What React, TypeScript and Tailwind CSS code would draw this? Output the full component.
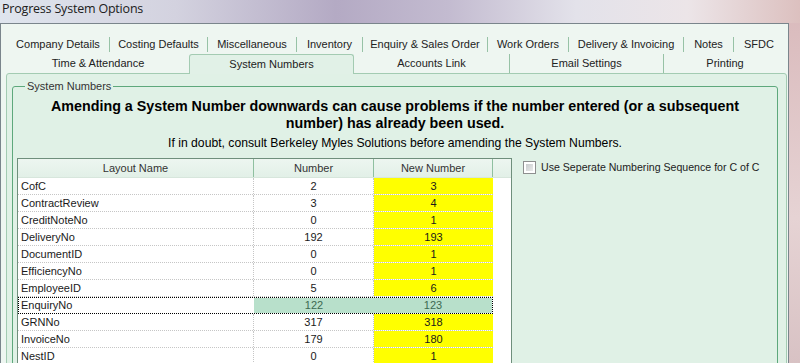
import React from 'react'

type Row = { name: string; num: string; next: string; sel?: boolean }

const rows: Row[] = [
  { name: 'CofC', num: '2', next: '3' },
  { name: 'ContractReview', num: '3', next: '4' },
  { name: 'CreditNoteNo', num: '0', next: '1' },
  { name: 'DeliveryNo', num: '192', next: '193' },
  { name: 'DocumentID', num: '0', next: '1' },
  { name: 'EfficiencyNo', num: '0', next: '1' },
  { name: 'EmployeeID', num: '5', next: '6' },
  { name: 'EnquiryNo', num: '122', next: '123', sel: true },
  { name: 'GRNNo', num: '317', next: '318' },
  { name: 'InvoiceNo', num: '179', next: '180' },
  { name: 'NestID', num: '0', next: '1' },
]

const topTabs = [
  { label: 'Company Details', w: 'w-[103px]' },
  { label: 'Costing Defaults', w: 'w-[98px]' },
  { label: 'Miscellaneous', w: 'w-[89px]' },
  { label: 'Inventory', w: 'w-[66px]' },
  { label: 'Enquiry & Sales Order', w: 'w-[125px]' },
  { label: 'Work Orders', w: 'w-[81px]' },
  { label: 'Delivery & Invoicing', w: 'w-[115px]' },
  { label: 'Notes', w: 'w-[50px]' },
  { label: 'SFDC', w: 'w-[50px]' },
]

const font = "font-['Liberation_Sans',Arial,sans-serif]"

export default function App() {
  return (
    <div className="relative w-[800px] h-[363px] overflow-hidden bg-[linear-gradient(180deg,#d9b9bb_0%,#e6d3d4_60%,#d8c2c4_100%)] text-[#1b1b1b]">
      {/* title bar */}
      <div className="h-[23px] pl-[2px] flex items-center bg-[linear-gradient(90deg,#dfe5ee_0%,#d3d2df_22%,#b4aac4_42%,#c3bbd0_56%,#e3e2ea_72%,#ece5e8_86%,#dcc0bf_100%)]">
        <span className="text-[12.5px] text-[#202020] font-['Open_Sans',sans-serif] tracking-[-0.2px] leading-none mt-[-4px]">
          Progress System Options
        </span>
      </div>

      {/* window body */}
      <div className={`w-[789px] h-[340px] border-t border-l border-r border-[#7a858c] bg-[#eef6f1] pt-[12px] ${font}`}>
        {/* tab row 1 */}
        <div className="flex items-center h-[17px] pl-[6px] text-[11px] text-[#222]">
          {topTabs.map((t, i) => (
            <div
              key={t.label}
              className={`${t.w} h-[15px] flex items-center justify-center ${
                i < topTabs.length - 1 ? 'border-r border-[#97c2a6]' : ''
              }`}
            >
              {t.label}
            </div>
          ))}
        </div>

        {/* tab row 2 */}
        <div className="flex items-end h-[20px] pl-[6px] text-[11px] text-[#222] relative z-10">
          <div className="w-[182px] h-[19px] flex items-center justify-center">Time &amp; Attendance</div>
          <div className="w-[165px] h-[20px] mb-[-1px] flex items-center justify-center bg-[#e1f1e7] border border-b-0 border-[#a3cbb2] rounded-t-[3px]">
            System Numbers
          </div>
          <div className="w-[156px] h-[19px] flex items-center justify-center border-r border-[#97c2a6]">
            Accounts Link
          </div>
          <div className="w-[154px] h-[19px] flex items-center justify-center border-r border-[#97c2a6]">
            Email Settings
          </div>
          <div className="w-[122px] h-[19px] flex items-center justify-center">Printing</div>
        </div>

        {/* tab panel */}
        <div className="ml-[5px] w-[781px] h-[300px] border border-[#a3cbb2] rounded-t-[3px] bg-[#e0f1e6] pl-[5px] pr-[8px] pt-[4px]">
          <fieldset className="h-[300px] border border-[#5ea87c] rounded-[3px] px-[4px]">
            <legend className="ml-[8px] px-[2px] text-[11px] text-[#333] leading-[16px]">System Numbers</legend>

            <p className="mt-[4px] text-center font-bold text-[14.3px] leading-[17px] text-black">
              Amending a System Number downwards can cause problems if the number entered (or a subsequent
              <br />
              number) has already been used.
            </p>
            <p className="mt-[3px] text-center text-[12.2px] leading-[16px] text-black">
              If in doubt, consult Berkeley Myles Solutions before amending the System Numbers.
            </p>

            <div className="mt-[7px] flex items-start">
              {/* grid */}
              <div className="w-[495px] h-[220px] border-l border-t border-r border-[#6f8f7c] bg-white text-[11px] text-[#1a1a1a]">
                <div className="flex h-[19px] border-b border-[#d7e6dc] bg-[linear-gradient(180deg,#edf6f0_0%,#e2f0e7_100%)] text-[#333]">
                  <div className="w-[236px] flex items-center justify-center border-r border-[#8fc0a0]">Layout Name</div>
                  <div className="w-[120px] flex items-center justify-center border-r border-[#8fc0a0]">Number</div>
                  <div className="w-[119px] flex items-center justify-center border-r border-[#8fc0a0]">New Number</div>
                </div>
                {rows.map((r) =>
                  r.sel ? (
                    <div
                      key={r.name}
                      className="flex w-[475px] h-[17px] border border-dotted border-black"
                    >
                      <div className="w-[235px] pl-[2px] flex items-center">{r.name}</div>
                      <div className="w-[120px] flex items-center justify-center bg-[#b8e0cb] text-[#3c6a52]">{r.num}</div>
                      <div className="w-[118px] flex items-center justify-center bg-[#b8e0cb] text-[#3c6a52]">{r.next}</div>
                    </div>
                  ) : (
                    <div key={r.name} className="flex w-[475px] h-[17px] border-b border-dotted border-[#c6c6c6]">
                      <div className="w-[236px] pl-[3px] flex items-center border-r border-dotted border-[#c6c6c6]">{r.name}</div>
                      <div className="w-[120px] flex items-center justify-center border-r border-dotted border-[#c6c6c6]">{r.num}</div>
                      <div className="w-[119px] flex items-center justify-center bg-[#ffff00]">{r.next}</div>
                    </div>
                  )
                )}
              </div>

              {/* checkbox */}
              <label className="ml-[11px] mt-[3px] flex items-center gap-[5px] whitespace-nowrap text-[10.6px] leading-[13px] text-[#222]">
                <span className="w-[13px] h-[13px] shrink-0 border border-[#8e8f8f] bg-white p-[2px]">
                  <span className="block w-full h-full bg-[linear-gradient(135deg,#c9cccd_0%,#e9eaea_100%)]" />
                </span>
                Use Seperate Numbering Sequence for C of C
              </label>
            </div>
          </fieldset>
        </div>
      </div>
    </div>
  )
}
